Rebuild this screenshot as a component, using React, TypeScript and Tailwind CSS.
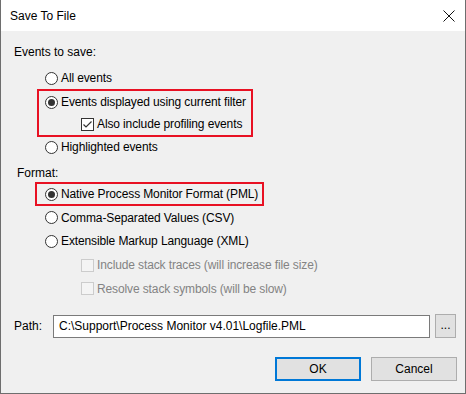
import { ReactNode } from "react";

const font = { fontFamily: '"Liberation Sans", Arial, sans-serif' };

function Radio({ checked, label }: { checked?: boolean; label: string }) {
  return (
    <div className="flex items-center gap-[3px] whitespace-nowrap">
      <span className="w-[13px] h-[13px] rounded-full border border-[#333] bg-white flex items-center justify-center shrink-0">
        {checked && <span className="w-[7px] h-[7px] rounded-full bg-[#333]" />}
      </span>
      <span className="text-[12px] text-black leading-none tracking-[-0.12px]">{label}</span>
    </div>
  );
}

function Check({ checked, disabled, label }: { checked?: boolean; disabled?: boolean; label: string }) {
  return (
    <div className="flex items-center gap-[3px] whitespace-nowrap">
      <span
        className={
          disabled
            ? "w-[13px] h-[13px] border border-[#cccccc] bg-[#f4f4f4] shrink-0"
            : "w-[13px] h-[13px] border border-[#333] bg-white shrink-0 flex items-center justify-center"
        }
      >
        {checked && (
          <svg width="11" height="11" viewBox="0 0 11 11">
            <path d="M1.5 5.5 L4 8 L9.5 2.5" fill="none" stroke="#333" strokeWidth="1.2" />
          </svg>
        )}
      </span>
      <span
        className={
          disabled
            ? "text-[12px] text-[#838383] leading-none tracking-[-0.12px]"
            : "text-[12px] text-black leading-none tracking-[-0.12px]"
        }
      >
        {label}
      </span>
    </div>
  );
}

function Row({ h, ml, children }: { h: string; ml: string; children: ReactNode }) {
  return <div className={`flex items-center ${h} ${ml}`}>{children}</div>;
}

export default function App() {
  return (
    <div style={font} className="w-[466px] h-[394px] flex flex-col border-x border-b border-[#6e6e6e] bg-[#f0f0f0]">
      <div className="h-[31px] bg-white flex items-center justify-between pl-[9px] pr-[9px] shrink-0">
        <span className="text-[12px] text-black">Save To File</span>
        <svg width="12" height="12" viewBox="0 0 12 12" className="mr-[1px]">
          <path d="M0.5 0.5 L11.5 11.5 M11.5 0.5 L0.5 11.5" stroke="#111" strokeWidth="1" />
        </svg>
      </div>

      <div className="flex flex-col">
        <div className="mt-[13px] h-[16px] ml-[13px] flex items-center text-[12px]">Events to save:</div>

        <div className="mt-[7px]">
          <Row h="h-[22px]" ml="ml-[44px]">
            <Radio label="All events" />
          </Row>
        </div>

        <div className="ml-[36px] w-[216px] border-2 border-[#e81123] pl-[6px]">
          <Row h="h-[22px]" ml="ml-0">
            <Radio checked label="Events displayed using current filter" />
          </Row>
          <Row h="h-[22px]" ml="ml-[36px]">
            <Check checked label="Also include profiling events" />
          </Row>
        </div>

        <Row h="h-[20px]" ml="ml-[44px]">
          <Radio label="Highlighted events" />
        </Row>

        <div className="mt-[8px] h-[16px] ml-[16px] flex items-center text-[12px]">Format:</div>

        <div className="mt-[1px] ml-[34px] w-[229px] border-2 border-[#e81123] pl-[8px]">
          <Row h="h-[20px]" ml="ml-0">
            <Radio checked label="Native Process Monitor Format (PML)" />
          </Row>
        </div>

        <Row h="h-[23px]" ml="ml-[44px]">
          <Radio label="Comma-Separated Values (CSV)" />
        </Row>
        <Row h="h-[24px]" ml="ml-[44px]">
          <Radio label="Extensible Markup Language (XML)" />
        </Row>
        <Row h="h-[24px]" ml="ml-[80px]">
          <Check disabled label="Include stack traces (will increase file size)" />
        </Row>
        <Row h="h-[23px]" ml="ml-[80px]">
          <Check disabled label="Resolve stack symbols (will be slow)" />
        </Row>

        <div className="mt-[14px] flex items-center h-[24px]">
          <span className="ml-[13px] w-[39px] text-[12px]">Path:</span>
          <div className="w-[377px] h-[23px] bg-white border border-[#7a7a7a] flex items-center pl-[5px] text-[12px] whitespace-nowrap">
            C:\Support\Process Monitor v4.01\Logfile.PML
          </div>
          <div className="ml-[5px] w-[21px] h-[24px] bg-[#e1e1e1] border border-[#adadad] flex items-center justify-center text-[12px] leading-none pb-[3px]">
            ...
          </div>
        </div>

        <div className="mt-[19px] flex justify-end pr-[8px] gap-[10px]">
          <div className="w-[86px] h-[24px] bg-[#e1e1e1] border-2 border-[#0078d7] flex items-center justify-center text-[12px]">
            OK
          </div>
          <div className="w-[86px] h-[24px] bg-[#e1e1e1] border border-[#adadad] flex items-center justify-center text-[12px]">
            Cancel
          </div>
        </div>
      </div>
    </div>
  );
}
